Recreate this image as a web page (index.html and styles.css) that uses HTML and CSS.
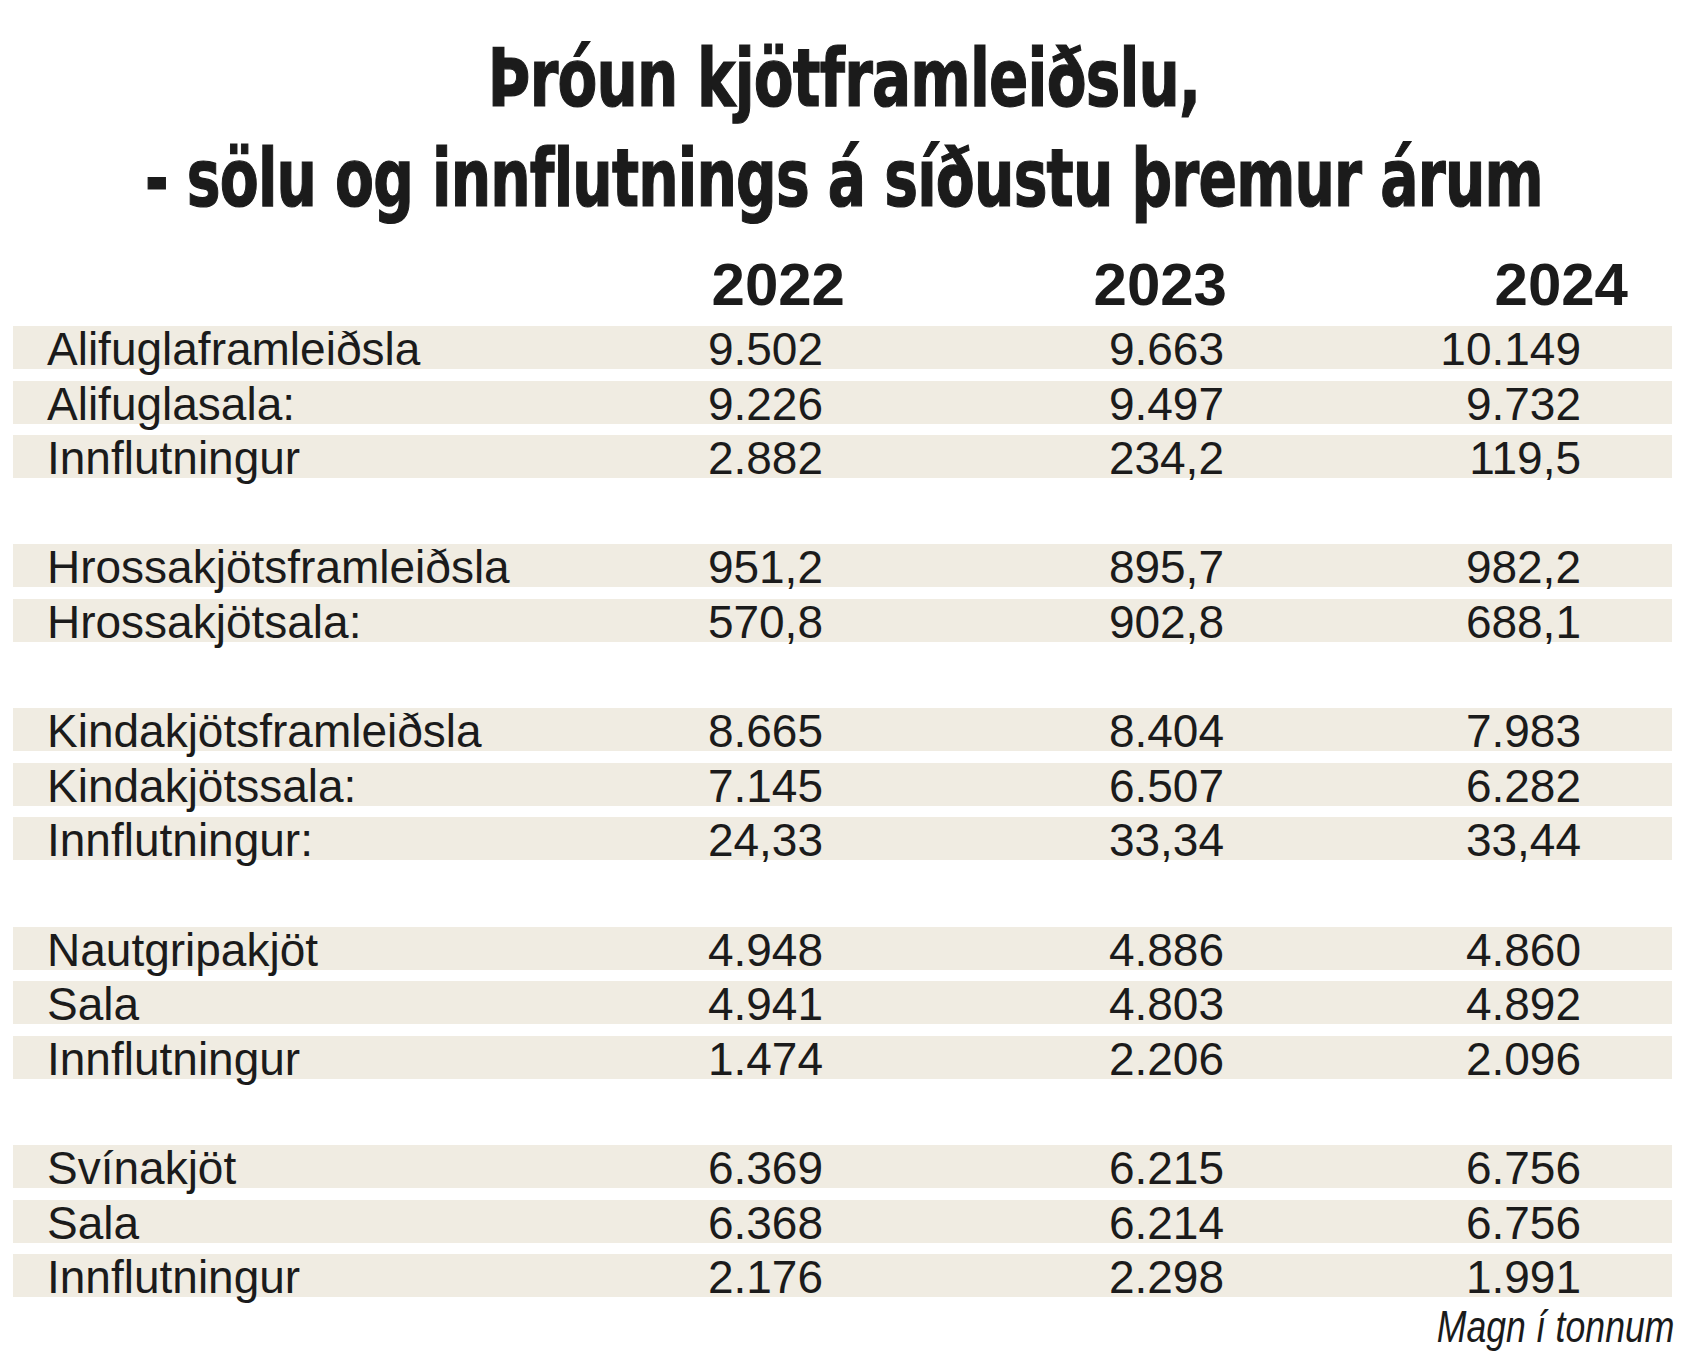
FILE: index.html
```html
<!DOCTYPE html>
<html lang="is">
<head>
<meta charset="utf-8">
<title>Þróun kjötframleiðslu</title>
<link rel="stylesheet" href="styles.css">
</head>
<body>
<div class="page">
  <h1 class="title">
    <span class="title-line line1">Þróun kjötframleiðslu,</span>
    <span class="title-line line2">- sölu og innflutnings á síðustu þremur árum</span>
  </h1>
  <div class="table">
    <div class="head">
      <span></span><span class="year">2022</span><span class="year">2023</span><span class="year">2024</span><span></span>
    </div>
    <div class="rows">
      <div class="row"><span class="label">Alifuglaframleiðsla</span><span class="num">9.502</span><span class="num">9.663</span><span class="num">10.149</span></div>
      <div class="row"><span class="label">Alifuglasala:</span><span class="num">9.226</span><span class="num">9.497</span><span class="num">9.732</span></div>
      <div class="row"><span class="label">Innflutningur</span><span class="num">2.882</span><span class="num">234,2</span><span class="num">119,5</span></div>
      <div class="spacer"></div>
      <div class="row"><span class="label">Hrossakjötsframleiðsla</span><span class="num">951,2</span><span class="num">895,7</span><span class="num">982,2</span></div>
      <div class="row"><span class="label">Hrossakjötsala:</span><span class="num">570,8</span><span class="num">902,8</span><span class="num">688,1</span></div>
      <div class="spacer"></div>
      <div class="row"><span class="label">Kindakjötsframleiðsla</span><span class="num">8.665</span><span class="num">8.404</span><span class="num">7.983</span></div>
      <div class="row"><span class="label">Kindakjötssala:</span><span class="num">7.145</span><span class="num">6.507</span><span class="num">6.282</span></div>
      <div class="row"><span class="label">Innflutningur:</span><span class="num">24,33</span><span class="num">33,34</span><span class="num">33,44</span></div>
      <div class="spacer"></div>
      <div class="row"><span class="label">Nautgripakjöt</span><span class="num">4.948</span><span class="num">4.886</span><span class="num">4.860</span></div>
      <div class="row"><span class="label">Sala</span><span class="num">4.941</span><span class="num">4.803</span><span class="num">4.892</span></div>
      <div class="row"><span class="label">Innflutningur</span><span class="num">1.474</span><span class="num">2.206</span><span class="num">2.096</span></div>
      <div class="spacer"></div>
      <div class="row"><span class="label">Svínakjöt</span><span class="num">6.369</span><span class="num">6.215</span><span class="num">6.756</span></div>
      <div class="row"><span class="label">Sala</span><span class="num">6.368</span><span class="num">6.214</span><span class="num">6.756</span></div>
      <div class="row"><span class="label">Innflutningur</span><span class="num">2.176</span><span class="num">2.298</span><span class="num">1.991</span></div>
    </div>
    <div class="note"><span class="note-text">Magn í tonnum</span></div>
  </div>
</div>
</body>
</html>
```
FILE: styles.css
```css
html, body {
  margin: 0;
  padding: 0;
  background: #ffffff;
}
body {
  width: 1688px;
  height: 1364px;
  overflow: hidden;
  color: #1b1b1b;
  font-family: "Liberation Sans", Arial, sans-serif;
}
.page {
  padding-top: 29px;
}
.title {
  margin: 0;
  display: flex;
  flex-direction: column;
  align-items: center;
  font-family: "DejaVu Sans Condensed", "DejaVu Sans", sans-serif;
  font-stretch: condensed;
  font-weight: bold;
  font-size: 80px;
  line-height: 100px;
  letter-spacing: -1px;
  -webkit-text-stroke: 1.2px #1b1b1b;
}
.title-line {
  display: block;
  white-space: nowrap;
}
.line1 { transform: scaleX(0.806); }
.line2 { transform: scaleX(0.788); }
.table {
  margin-left: 13px;
  width: 1659px;
  margin-top: 27px;
}
.head {
  display: grid;
  grid-template-columns: 632px 200px 382px 401px 44px;
  font-weight: bold;
  font-size: 60px;
  line-height: 58px;
  margin-bottom: 12px;
}
.year {
  text-align: right;
}
.rows {
  display: flex;
  flex-direction: column;
  gap: 11.6px;
}
.row, .spacer {
  height: 43px;
}
.row {
  display: grid;
  grid-template-columns: 610px 200px 401px 357px 91px;
  align-items: start;
  background: #f0ece2;
  font-size: 46px;
  line-height: 46px;
}
.label {
  padding-left: 34px;
  white-space: nowrap;
}
.num {
  text-align: right;
  white-space: nowrap;
}
.note {
  display: flex;
  justify-content: flex-end;
  margin-top: 8px;
  font-style: italic;
  font-size: 44px;
  line-height: 44px;
}
.note-text {
  display: block;
  transform: scaleX(0.81);
  transform-origin: right center;
  margin-right: -2px;
}
```
